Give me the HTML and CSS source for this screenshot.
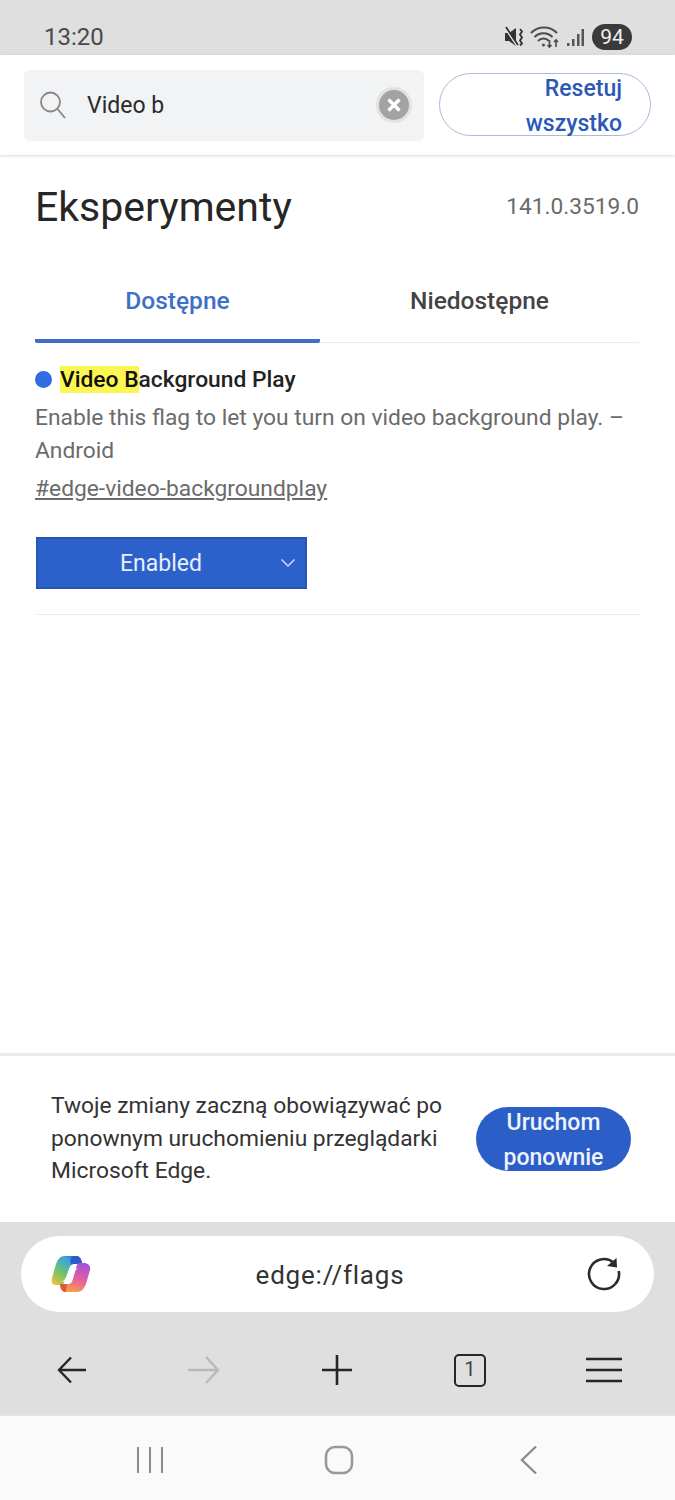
FILE: index.html
```html
<!DOCTYPE html>
<html lang="pl">
  <head>
    <meta charset="UTF-8" />
    <meta name="viewport" content="width=device-width, initial-scale=1.0" />
    <title>Eksperymenty</title>
    <link rel="stylesheet" href="styles.css">
  </head>
  <body>
    <div class="phone">
      <div class="status-bar">
        <span class="clock">13:20</span>
        <div class="status-icons">
          <svg width="20" height="22" viewBox="0 0 20 22" fill="none">
            <path d="M1 7h4l7-5v18l-7-5H1z" fill="#333"/>
            <path d="M1 2l12 18" stroke="#dfdfdf" stroke-width="1.800"/>
            <path d="M2 1l12 18" stroke="#333" stroke-width="1.800"/>
            <path d="M16 3l2 2.500-2 3 2 3-2 3 2 3-2 2" stroke="#333" stroke-width="1.800"/>
          </svg>
          <svg width="30" height="24" viewBox="0 0 30 24" fill="none" stroke="#4c4c4c" stroke-width="2">
            <path d="M1 8a18 18 0 0 1 26 0M4.500 12a12.500 12.500 0 0 1 18 0M8 16a7.500 7.500 0 0 1 11 0"/>
            <circle cx="13.500" cy="20" r="1.500" fill="#4c4c4c" stroke="none"/>
            <path d="M19.500 15v7M17.500 20l2 2 2-2M26 22v-7M24 17l2-2 2 2" stroke-width="1.600"/>
          </svg>
          <svg width="20" height="20" viewBox="0 0 20 20" fill="#555">
            <rect x="1" y="16" width="2.500" height="3"/>
            <rect x="6" y="12" width="2.500" height="7"/>
            <rect x="11" y="7" width="2.500" height="12"/>
            <rect x="15.500" y="2" width="2.500" height="17"/>
          </svg>
          <span class="battery">94</span>
        </div>
      </div>

      <header class="search-header">
        <div class="search-box">
          <svg class="search-icon" width="28" height="30" viewBox="0 0 28 30" fill="none" stroke="#868686" stroke-width="1.800">
            <circle cx="11.500" cy="12" r="9.500"/>
            <path d="M18.500 19l7.500 9"/>
          </svg>
          <span class="search-text">Video b</span>
          <span class="clear-btn">
            <svg width="32" height="32" viewBox="0 0 32 32" fill="none">
              <circle cx="16" cy="16" r="15" fill="#a3a3a3"/>
              <path d="M10.500 10.500l11 11M21.500 10.500l-11 11" stroke="#fff" stroke-width="3.400"/>
            </svg>
          </span>
        </div>
        <button class="reset-btn">Resetuj wszystko</button>
      </header>

      <main class="content">
        <div class="title-row">
          <h1>Eksperymenty</h1>
          <span class="version">141.0.3519.0</span>
        </div>

        <div class="tabs">
          <div class="tab tab-active">Dostępne</div>
          <div class="tab">Niedostępne</div>
        </div>

        <section class="flag">
          <div class="flag-name">
            <span class="dot"></span>
            <span><mark>Video B</mark>ackground Play</span>
          </div>
          <p class="flag-desc">Enable this flag to let you turn on video background play. – Android</p>
          <a class="flag-link">#edge-video-backgroundplay</a>
          <div class="select">
            <span>Enabled</span>
            <svg class="select-arrow" width="16" height="10" viewBox="0 0 16 10" fill="none" stroke="#c9daf6" stroke-width="1.500">
              <path d="M1.500 1.500L8 8l6.500-6.500"/>
            </svg>
          </div>
        </section>
      </main>

      <div class="restart-banner">
        <p>Twoje zmiany zaczną obowiązywać po ponownym uruchomieniu przeglądarki Microsoft Edge.</p>
        <button class="restart-btn">Uruchom ponownie</button>
      </div>

      <div class="browser-bar">
        <div class="address-bar">
          <svg width="42" height="38" viewBox="0 0 42 38">
            <defs>
              <linearGradient id="cp-a" x1="0.100" y1="1" x2="0.800" y2="0">
                <stop offset="0" stop-color="#ecc33c"/>
                <stop offset="0.400" stop-color="#6cc46c"/>
                <stop offset="0.800" stop-color="#3aa0e4"/>
                <stop offset="1" stop-color="#2a62cc"/>
              </linearGradient>
              <linearGradient id="cp-b" x1="0.700" y1="0" x2="0.400" y2="1">
                <stop offset="0" stop-color="#a650dc"/>
                <stop offset="0.550" stop-color="#e4609c"/>
                <stop offset="1" stop-color="#f6a04a"/>
              </linearGradient>
            </defs>
            <path d="M15 1H26C29 1 31 3 31.500 6L32 9H24C21 9 20 11 19 14L14 28C13 30 11 30 9 30H6C2 30 1 27 2 23L6 9C8 4 10 1 15 1Z" fill="url(#cp-a)"/>
            <path d="M24 1H26C29 1 31 3 31.500 6L32 9H24C23 9 22 9.500 21.500 10L20 6C21 3 22 1 24 1Z" fill="#2a5cc8"/>
            <path d="M29 8H34C38 8 41 11 40 15L36 29C34 34 31 37 27 37H16C13 37 11 35 10.500 32L10 29H18C21 29 22 27 23 24L26 13C27 10 27 8 29 8Z" fill="url(#cp-b)"/>
            <path d="M10 29H17L16 37C13 37 11 35 10.500 32Z" fill="#dc5a38"/>
            <path d="M20.500 13H27L21 24C20 26 18 26.500 16 26.500H11.500C14 26 15.500 24 16.500 21.500L18.500 16C19 14 19.500 13 20.500 13Z" fill="#fff"/>
          </svg>
          <span class="url">edge://flags</span>
          <svg width="36" height="36" viewBox="0 0 36 36" fill="none" stroke="#2b2b2b" stroke-width="2.600">
            <path d="M27.600 6.500A15 15 0 1 0 32.700 14.900"/>
            <path d="M21 10L31 11.500L30.500 2Z" fill="#2b2b2b" stroke="none"/>
          </svg>
        </div>
        <nav class="toolbar">
          <svg width="30" height="28" viewBox="0 0 30 28" fill="none" stroke="#262626" stroke-width="2.400">
            <path d="M29 14H2M14 1.500L2 14l12 12.500"/>
          </svg>
          <svg width="34" height="30" viewBox="0 0 34 30" fill="none" stroke="#b9b9b9" stroke-width="2.400">
            <path d="M1 15h30M19 2l12 13-12 13"/>
          </svg>
          <svg width="32" height="32" viewBox="1 0 32 32" fill="none" stroke="#262626" stroke-width="2.600">
            <path d="M16 1v30M1 16h30"/>
          </svg>
          <span class="tab-count">1</span>
          <svg width="36" height="28" viewBox="0 0 36 28" fill="none" stroke="#262626" stroke-width="2.600">
            <path d="M0 3h36M0 14h36M0 25h36"/>
          </svg>
        </nav>
      </div>

      <div class="nav-bar">
        <svg width="28" height="28" viewBox="0 0 28 28" fill="none" stroke="#8c8c8c" stroke-width="2">
          <path d="M2 1v26M14 1v26M26 1v26"/>
        </svg>
        <svg class="home-icon" width="30" height="30" viewBox="0 0 30 30" fill="none" stroke="#999" stroke-width="2.600">
          <rect x="2" y="2" width="26" height="26" rx="9"/>
        </svg>
        <svg width="20" height="30" viewBox="0 0 20 30" fill="none" stroke="#8c8c8c" stroke-width="2.400">
          <path d="M17 1.500L3 15l14 13.500"/>
        </svg>
      </div>
    </div>
  </body>
</html>
```

FILE: styles.css
```css
* {
    box-sizing: border-box;
}
body {
    margin: 0;
    font-family: Roboto, "Liberation Sans", sans-serif;
    background-color: #fff;
}
.phone {
    display: flex;
    flex-direction: column;
    height: 1500px;
    overflow: hidden;
}
.status-bar {
    display: flex;
    justify-content: space-between;
    align-items: center;
    height: 55px;
    padding: 18px 43px 0 44px;
    background-color: #dfdfdf;
}
.clock {
    font-size: 24px;
    color: #4a4a4a;
}
.status-icons {
    display: flex;
    align-items: center;
    gap: 6px;
}
.battery {
    width: 40px;
    height: 26px;
    border-radius: 13px;
    background-color: #3a3a3a;
    color: #f2f2f2;
    font-size: 21px;
    line-height: 26px;
    text-align: center;
}
.search-header {
    position: relative;
    display: flex;
    align-items: center;
    gap: 15px;
    height: 100px;
    padding: 0 24px 0 24px;
    background-color: #fff;
    box-shadow: 0 1px 3px rgba(0, 0, 0, 0.15);
}
.search-box {
    display: flex;
    align-items: center;
    width: 401px;
    height: 71px;
    padding: 0 12px 0 15px;
    border-radius: 6px;
    background-color: #f1f3f5;
}
.search-text {
    flex: 1;
    margin-left: 20px;
    font-size: 23px;
    color: #2a2a2a;
}
.clear-btn {
    display: flex;
    width: 36px;
    height: 36px;
    align-items: center;
    justify-content: center;
    border-radius: 50%;
    background-color: #e2e2e2;
}
.reset-btn {
    display: flex;
    align-items: center;
    justify-content: flex-end;
    width: 212px;
    height: 63px;
    margin-bottom: 2px;
    padding: 3px 28px 0 70px;
    border: 1px solid #a9bcd8;
    border-radius: 32px;
    background-color: #fff;
    color: #2b58b5;
    font-family: inherit;
    font-size: 23px;
    font-weight: 500;
    line-height: 35px;
    text-align: right;
}
.content {
    flex: 1;
    padding: 0 36px 0 35px;
}
.title-row {
    display: flex;
    justify-content: space-between;
    align-items: center;
    height: 103px;
}
h1 {
    margin: 0;
    font-size: 41px;
    font-weight: 400;
    color: #262626;
}
.version {
    font-size: 22.700px;
    color: #6a6a6a;
}
.tabs {
    display: flex;
    height: 85px;
    border-bottom: 1px solid #ececec;
}
.tab {
    display: flex;
    flex: 1;
    align-items: center;
    justify-content: center;
    padding-top: 1px;
    font-size: 24.500px;
    font-weight: 500;
    color: #444;
}
.tab-active {
    flex: none;
    width: 285px;
    margin-bottom: -1px;
    padding-top: 4px;
    border-bottom: 4px solid #3d6fc9;
    border-radius: 0 0 2px 2px;
    color: #3d70c9;
}
.flag {
    padding-top: 21px;
    padding-bottom: 25px;
    border-bottom: 1px solid #ececec;
    margin-right: -2px;
}
.flag-name {
    display: flex;
    align-items: center;
    gap: 8px;
    height: 31px;
    font-size: 22.800px;
    font-weight: 500;
    color: #222;
}
.dot {
    width: 17px;
    height: 17px;
    border-radius: 50%;
    background-color: #2f6de0;
}
mark {
    background-color: #fbf651;
    color: #111;
}
.flag-desc {
    margin: 6px 0 0;
    font-size: 22.800px;
    line-height: 33px;
    color: #6b6b6b;
}
.flag-link {
    display: block;
    margin-top: 5px;
    font-size: 22.800px;
    line-height: 33px;
    color: #6b6b6b;
    text-decoration: underline;
}
.select {
    position: relative;
    width: 271px;
    height: 52px;
    margin-top: 32px;
    margin-left: 1px;
    padding-right: 21px;
    border: 2px solid #2655b5;
    background-color: #2c61cb;
    color: #e8effb;
    font-size: 23px;
    line-height: 49px;
    text-align: center;
}
.select-arrow {
    position: absolute;
    right: 9px;
    top: 19px;
}
.restart-banner {
    display: flex;
    align-items: center;
    justify-content: space-between;
    height: 169px;
    padding: 0 44px 0 51px;
    background-color: #fff;
    border-top: 3px solid #eaeaea;
}
.restart-banner p {
    width: 410px;
    margin: 0;
    font-size: 22.800px;
    line-height: 32.500px;
    color: #333;
}
.restart-btn {
    display: flex;
    align-items: center;
    justify-content: center;
    width: 155px;
    height: 64px;
    padding: 1px 0 0;
    border: none;
    border-radius: 32px;
    background-color: #2b5fc7;
    color: #eef3fc;
    font-family: inherit;
    font-size: 23px;
    font-weight: 500;
    line-height: 35px;
    text-align: center;
}
.browser-bar {
    height: 193px;
    padding: 14px 21px 0;
    background-color: #dfdfdf;
}
.address-bar {
    display: flex;
    align-items: center;
    justify-content: space-between;
    height: 76px;
    padding: 0 32px 0 29px;
    border-radius: 38px;
    background-color: #fff;
}
.url {
    padding: 2px 18px 0 0;
    font-size: 26px;
    letter-spacing: 0.800px;
    color: #333;
}
.toolbar {
    display: flex;
    align-items: center;
    justify-content: space-between;
    height: 90px;
    margin-top: 13px;
    padding: 0 32px 0 36px;
}
.tab-count {
    width: 32px;
    height: 33px;
    border: 2.500px solid #262626;
    border-radius: 5px;
    font-size: 20px;
    line-height: 27px;
    text-align: center;
    color: #444;
}
.nav-bar {
    display: flex;
    align-items: center;
    justify-content: space-between;
    height: 85px;
    padding: 4px 136px 0 136px;
    background-color: #fafafa;
    border-top: 1px solid #e4e4e4;
}
.home-icon {
    margin-right: 6px;
}
```
